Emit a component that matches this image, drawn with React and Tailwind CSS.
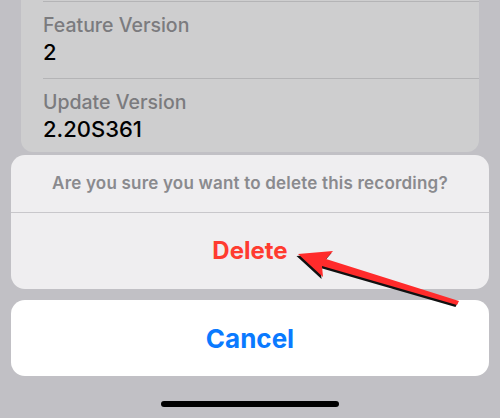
import React from "react";

// dimmed settings card behind the sheet
function InfoRow({ label, value, last }) {
  return (
    <div className={`ml-[22px] pt-3 ${last ? "pb-[10px]" : "pb-[13px] border-b border-[#b4b4b6]"}`}>
      <div className="text-[19.5px] leading-[23px] font-medium text-[#7b7b7e]">{label}</div>
      <div className="mt-[2px] text-[22px] leading-[26px] font-medium text-black">{value}</div>
    </div>
  );
}

function Arrow() {
  const pts = "298,254 333,251 326,259 459,301 457,305 322,266 323,277";
  return (
    <svg className="absolute left-0 top-0 pointer-events-none" width="500" height="418" viewBox="0 0 500 418">
      <polygon points={pts} fill="#111" transform="translate(-1.5,2)" />
      <polygon points={pts} fill="#ff2b2b" />
    </svg>
  );
}

export default function App() {
  return (
    <div
      className="relative w-[500px] h-[418px] overflow-hidden bg-[#c1c0c5]"
      style={{ fontFamily: "Inter, 'Liberation Sans', sans-serif" }}
    >
      <div className="mx-[21px] -mt-5 rounded-[12px] bg-[#cececf]">
        <div className="ml-[22px] h-[22px] border-b border-[#b4b4b6]" />
        <InfoRow label="Feature Version" value="2" />
        <InfoRow label="Update Version" value="2.20S361" last />
      </div>

      {/* action sheet */}
      <div className="absolute left-[11px] right-[11px] top-[155px] flex flex-col gap-[11px]">
        <div className="rounded-[14px] bg-[#efeef0] overflow-hidden">
          <div className="h-[58px] flex items-center justify-center border-b border-[#c8c7cb] text-[17px] tracking-[0.2px] font-semibold text-[#8a8a8e]">
            Are you sure you want to delete this recording?
          </div>
          <button className="w-full h-[76px] flex items-center justify-center text-[24px] font-bold text-[#ff3b30]">
            Delete
          </button>
        </div>
        <button className="w-full h-[76px] rounded-[14px] bg-white flex items-center justify-center text-[26px] font-bold text-[#0a7aff]">
          Cancel
        </button>
      </div>

      <div className="absolute left-[161px] top-[401px] w-[178px] h-[6px] rounded-full bg-black" />

      <Arrow />
    </div>
  );
}
